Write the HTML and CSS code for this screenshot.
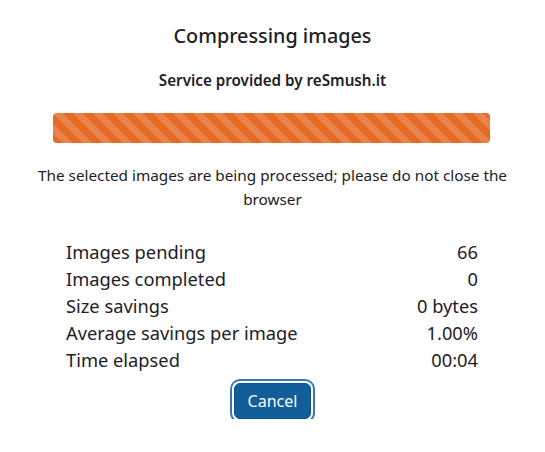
FILE: index.html
```html
<!DOCTYPE html>
<html>
<head>
    <link rel="stylesheet" href="styles.css">
</head>
<body>
    <div class="dialog">
        <h2 class="title">Compressing images</h2>
        <h4 class="subtitle">Service provided by reSmush.it</h4>

        <div class="progress">
            <div class="progress-bar"></div>
        </div>

        <p class="notice">The selected images are being processed; please do not close the browser</p>

        <table class="stats">
            <tr><td>Images pending</td><td class="value">66</td></tr>
            <tr><td>Images completed</td><td class="value">0</td></tr>
            <tr><td>Size savings</td><td class="value">0 bytes</td></tr>
            <tr><td>Average savings per image</td><td class="value">1.00%</td></tr>
            <tr><td>Time elapsed</td><td class="value">00:04</td></tr>
        </table>

        <div class="actions">
            <button class="btn-cancel" type="button">Cancel</button>
        </div>
    </div>
</body>
</html>
```

FILE: styles.css
```css
body {
    margin: 0;
    background-color: #fff;
    font-family: "Noto Sans", "Open Sans", sans-serif;
    color: #1d2125;
}

.dialog {
    width: 545px;
    padding-top: 22px;
    text-align: center;
}

.title {
    margin: 0;
    font-size: 19.8px;
    font-weight: 500;
    line-height: 28px;
}

.subtitle {
    margin: 19px 0 0;
    font-size: 15.2px;
    font-weight: 600;
    line-height: 22px;
}

.progress {
    margin: 22px 55px 0 53px;
    height: 30px;
    border-radius: 4px;
    overflow: hidden;
    background-color: #e9ecef;
}

.progress-bar {
    width: 100%;
    height: 100%;
    background-color: #e56a25;
    background-image: linear-gradient(45deg,
        rgba(255, 255, 255, 0.17) 25%, transparent 25%,
        transparent 50%, rgba(255, 255, 255, 0.17) 50%,
        rgba(255, 255, 255, 0.17) 75%, transparent 75%, transparent);
    background-size: 20px 20px;
}

.notice {
    margin: 20px 30px 0;
    font-size: 15.3px;
    line-height: 24px;
}

.stats {
    margin: 27px 0 0 66px;
    width: 412px;
    border-collapse: collapse;
    font-size: 18.3px;
    text-align: left;
}

.stats td {
    padding: 0;
    line-height: 27px;
}

.stats .value {
    text-align: right;
}

.actions {
    margin-top: 10px;
}

.btn-cancel {
    padding: 6px 13px;
    font-family: inherit;
    font-size: 16px;
    line-height: 22px;
    color: #fff;
    background-color: #115e9b;
    border: 1px solid #0d5289;
    border-radius: 6px;
    box-shadow: 0 0 0 2px #fff, 0 0 0 4px #3479b4;
}
```
